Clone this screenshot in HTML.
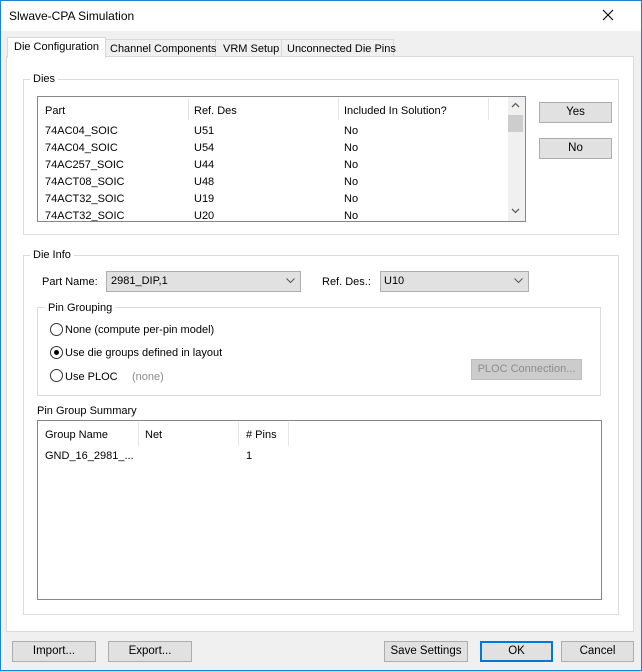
<!DOCTYPE html>
<html><head><style>
*{box-sizing:border-box;margin:0;padding:0}
body{width:642px;height:671px;background:#f0f0f0;font-family:"Liberation Sans",sans-serif;font-size:11px;color:#000;position:relative;overflow:hidden}
.a{position:absolute}
.t{position:absolute;white-space:nowrap;line-height:14px}
.btn{position:absolute;background:#e1e1e1;border:1px solid #adadad;text-align:center;font-size:11.5px}
.grp{position:absolute;border:1px solid #dcdcdc}
.lbl{position:absolute;background:#fff;padding:0 3px;line-height:14px;white-space:nowrap}
.rad{position:absolute;width:13px;height:13px;border:1px solid #333;border-radius:50%;background:#fff}
.sep{position:absolute;width:1px;background:#e5e5e5}
</style></head><body>
<div class="a" style="left:0;top:0;width:642px;height:671px;border:1px solid #1883d7"></div>
<div class="a" style="left:1px;top:1px;width:640px;height:30px;background:#fff"></div>
<div class="t" style="left:9px;top:9px;font-size:12px">Slwave-CPA Simulation</div>
<svg class="a" style="left:602px;top:9px" width="12" height="12"><path d="M1 1L11 11M11 1L1 11" stroke="#000" stroke-width="1.1"/></svg>

<!-- tabs -->
<div class="a" style="left:6px;top:56px;width:628px;height:576px;background:#fff;border:1px solid #d9d9d9"></div>
<div class="a" style="left:105px;top:39px;width:111px;height:18px;background:#f0f0f0;border:1px solid #d9d9d9"></div>
<div class="t" style="left:110px;top:42px">Channel Components</div>
<div class="a" style="left:216px;top:39px;width:66px;height:18px;background:#f0f0f0;border:1px solid #d9d9d9;border-left:none"></div>
<div class="t" style="left:223px;top:42px">VRM Setup</div>
<div class="a" style="left:281px;top:39px;width:113px;height:18px;background:#f0f0f0;border:1px solid #d9d9d9"></div>
<div class="t" style="left:287px;top:42px">Unconnected Die Pins</div>
<div class="a" style="left:7px;top:37px;width:99px;height:21px;background:#fff;border:1px solid #d9d9d9;border-bottom:none"></div>
<div class="t" style="left:14px;top:40px">Die Configuration</div>

<!-- Dies -->
<div class="grp" style="left:23px;top:79px;width:596px;height:156px"></div>
<div class="lbl" style="left:30px;top:72px">Dies</div>
<div class="a" style="left:37px;top:96px;width:489px;height:126px;border:1px solid #828790;background:#fff"></div>
<div class="sep" style="left:188px;top:98px;height:22px"></div>
<div class="sep" style="left:338px;top:98px;height:22px"></div>
<div class="sep" style="left:488px;top:98px;height:22px"></div>
<div class="a" style="left:508px;top:97px;width:17px;height:124px;background:#f0f0f0"></div>
<div class="a" style="left:508px;top:115px;width:15px;height:17px;background:#cdcdcd"></div>
<svg class="a" style="left:511px;top:102px" width="9" height="6"><path d="M1 5L4.5 1.5L8 5" stroke="#606060" fill="none" stroke-width="1.3"/></svg>
<svg class="a" style="left:511px;top:208px" width="9" height="6"><path d="M1 1L4.5 4.5L8 1" stroke="#606060" fill="none" stroke-width="1.3"/></svg>
<div class="t" style="left:45px;top:104px">Part</div>
<div class="t" style="left:194px;top:104px">Ref. Des</div>
<div class="t" style="left:344px;top:104px">Included In Solution?</div>
<div class="t" style="left:45px;top:124px">74AC04_SOIC</div><div class="t" style="left:194px;top:124px">U51</div><div class="t" style="left:344px;top:124px">No</div>
<div class="t" style="left:45px;top:141px">74AC04_SOIC</div><div class="t" style="left:194px;top:141px">U54</div><div class="t" style="left:344px;top:141px">No</div>
<div class="t" style="left:45px;top:158px">74AC257_SOIC</div><div class="t" style="left:194px;top:158px">U44</div><div class="t" style="left:344px;top:158px">No</div>
<div class="t" style="left:45px;top:175px">74ACT08_SOIC</div><div class="t" style="left:194px;top:175px">U48</div><div class="t" style="left:344px;top:175px">No</div>
<div class="t" style="left:45px;top:192px">74ACT32_SOIC</div><div class="t" style="left:194px;top:192px">U19</div><div class="t" style="left:344px;top:192px">No</div>
<div class="t" style="left:45px;top:209px;height:12px;overflow:hidden">74ACT32_SOIC</div><div class="t" style="left:194px;top:209px;height:12px;overflow:hidden">U20</div><div class="t" style="left:344px;top:209px;height:12px;overflow:hidden">No</div>
<div class="btn" style="left:539px;top:102px;width:73px;height:21px;line-height:19px">Yes</div>
<div class="btn" style="left:539px;top:138px;width:73px;height:21px;line-height:19px">No</div>

<!-- Die Info -->
<div class="grp" style="left:23px;top:255px;width:596px;height:360px"></div>
<div class="lbl" style="left:30px;top:248px">Die Info</div>
<div class="t" style="left:42px;top:275px">Part Name:</div>
<div class="btn" style="left:106px;top:271px;width:195px;height:21px;text-align:left;padding-left:4px;line-height:19px;font-size:11px">2981_DIP,1</div>
<svg class="a" style="left:286px;top:278px" width="9" height="6"><path d="M0.5 0.5L4.5 4.5L8.5 0.5" stroke="#555" fill="none"/></svg>
<div class="t" style="left:322px;top:275px">Ref. Des.:</div>
<div class="btn" style="left:380px;top:271px;width:149px;height:21px;text-align:left;padding-left:3px;line-height:19px;font-size:11px">U10</div>
<svg class="a" style="left:514px;top:278px" width="9" height="6"><path d="M0.5 0.5L4.5 4.5L8.5 0.5" stroke="#555" fill="none"/></svg>

<div class="grp" style="left:37px;top:307px;width:564px;height:89px"></div>
<div class="lbl" style="left:45px;top:301px">Pin Grouping</div>
<div class="rad" style="left:50px;top:323px"></div>
<div class="t" style="left:65px;top:323px">None (compute per-pin model)</div>
<div class="rad" style="left:50px;top:346px"></div>
<div class="a" style="left:54px;top:350px;width:5px;height:5px;border-radius:50%;background:#000"></div>
<div class="t" style="left:65px;top:346px">Use die groups defined in layout</div>
<div class="rad" style="left:50px;top:369px"></div>
<div class="t" style="left:65px;top:370px">Use PLOC</div>
<div class="t" style="left:132px;top:370px;color:#8a8a8a">(none)</div>
<div class="btn" style="left:471px;top:359px;width:111px;height:21px;line-height:19px;color:#8d8d8d;background:#cccccc;border-color:#bfbfbf;font-size:11px">PLOC Connection...</div>

<div class="t" style="left:37px;top:404px">Pin Group Summary</div>
<div class="a" style="left:37px;top:420px;width:565px;height:180px;border:1px solid #828790;background:#fff"></div>
<div class="sep" style="left:138px;top:422px;height:24px"></div>
<div class="sep" style="left:238px;top:422px;height:24px"></div>
<div class="sep" style="left:288px;top:422px;height:24px"></div>
<div class="t" style="left:45px;top:428px">Group Name</div>
<div class="t" style="left:145px;top:428px">Net</div>
<div class="t" style="left:246px;top:428px"># Pins</div>
<div class="t" style="left:45px;top:449px">GND_16_2981_...</div>
<div class="t" style="left:246px;top:449px">1</div>

<!-- bottom buttons -->
<div class="btn" style="left:12px;top:641px;width:84px;height:21px;line-height:19px">Import...</div>
<div class="btn" style="left:108px;top:641px;width:84px;height:21px;line-height:19px">Export...</div>
<div class="btn" style="left:384px;top:641px;width:84px;height:21px;line-height:19px">Save Settings</div>
<div class="btn" style="left:480px;top:641px;width:73px;height:21px;line-height:17px;border:2px solid #0078d7">OK</div>
<div class="btn" style="left:561px;top:641px;width:73px;height:21px;line-height:19px">Cancel</div>
</body></html>
